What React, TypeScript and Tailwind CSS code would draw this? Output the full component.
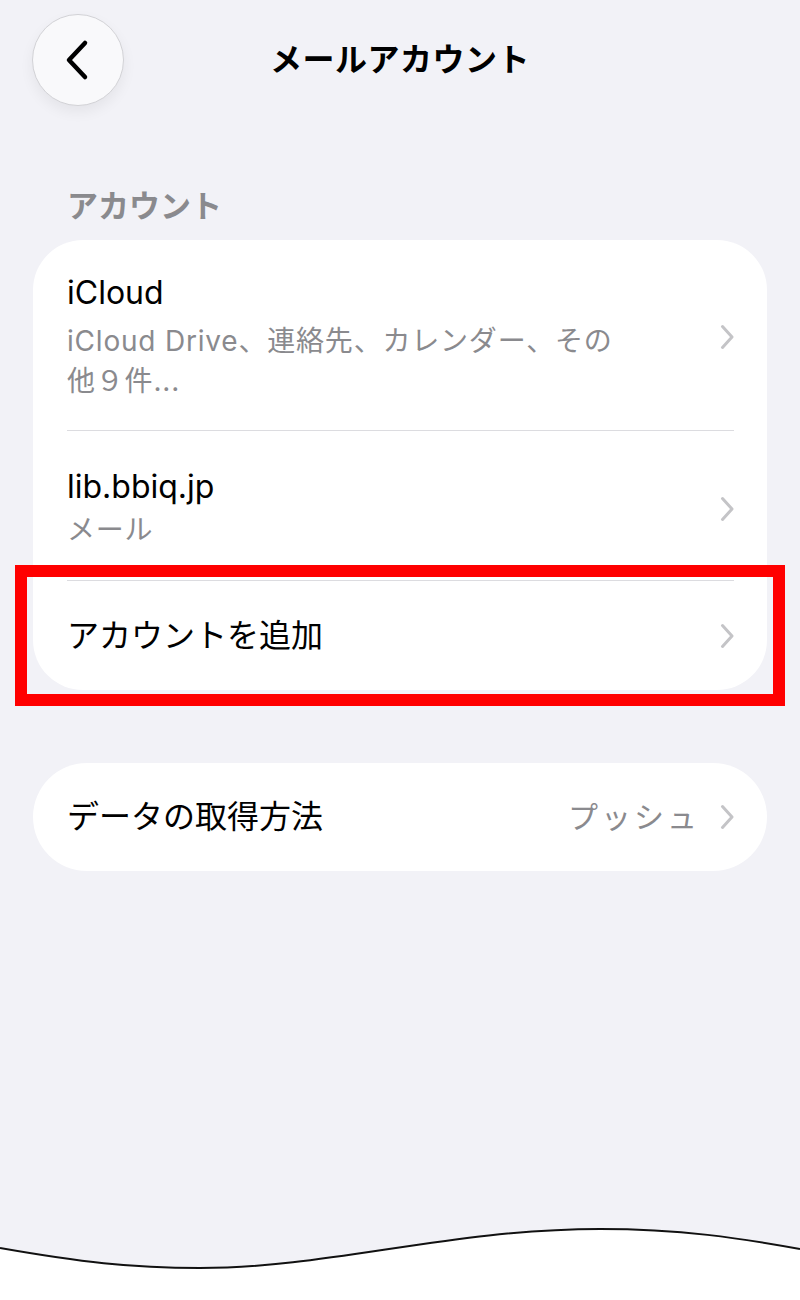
import React from "react";

const font = { fontFamily: 'Inter, "Noto Sans CJK JP", sans-serif' };

function Chevron() {
  return (
    <svg width="14" height="26" viewBox="0 0 14 26" fill="none" className="shrink-0">
      <polyline
        points="2.5,2.5 12,13 2.5,23.5"
        stroke="#c4c4c7"
        strokeWidth="3"
        strokeLinecap="round"
        strokeLinejoin="round"
      />
    </svg>
  );
}

function Divider() {
  return <div className="ml-[34px] mr-[33px] h-px bg-[#dcdce0]" />;
}

export default function App() {
  return (
    <div
      className="relative flex h-[1300px] w-[800px] flex-col overflow-hidden bg-[#f2f2f7] text-black"
      style={font}
    >
      {/* header */}
      <div className="grid grid-cols-[1fr_auto_1fr] items-center px-[32px] pt-[14px]">
        <button className="flex h-[92px] w-[92px] items-center justify-center rounded-full border border-[#d2d2d6] bg-[#f9f9fb] shadow-[0_6px_14px_rgba(0,0,0,0.06)]">
          <svg width="30" height="42" viewBox="0 0 30 42" fill="none">
            <polyline
              points="22,4 6,21 22,38"
              stroke="#000"
              strokeWidth="4.5"
              strokeLinecap="round"
              strokeLinejoin="round"
            />
          </svg>
        </button>
        <h1 className="text-[32px] font-bold leading-[40px] tracking-[0.5px]">メールアカウント</h1>
        <div />
      </div>

      {/* section header */}
      <div className="mt-[80px] px-[67px] text-[31px] font-semibold leading-[40px] text-[#8a8a8e]">
        アカウント
      </div>

      {/* accounts card */}
      <div className="mx-[33px] mt-[14px] rounded-[50px] bg-white">
        <div className="flex items-center pl-[34px] pr-[33px] pt-[33px] pb-[29px]">
          <div className="flex-1">
            <div className="text-[32px] leading-[40px]">iCloud</div>
            <div className="mt-[8px] text-[28px] leading-[40px] tracking-[0.8px] text-[#8a8a8e]">
              iCloud Drive、連絡先、カレンダー、その
              <br />
              他９件...
            </div>
          </div>
          <Chevron />
        </div>
        <Divider />
        <div className="flex items-center pl-[34px] pr-[33px] pt-[36px] pb-[30px]">
          <div className="flex-1">
            <div className="text-[32px] leading-[40px]">lib.bbiq.jp</div>
            <div className="mt-[3px] text-[28px] leading-[40px] tracking-[0.8px] text-[#8a8a8e]">メール</div>
          </div>
          <Chevron />
        </div>
        <Divider />
        <div className="flex h-[109px] items-center pl-[34px] pr-[33px]">
          <div className="flex-1 text-[32px] leading-[40px]">アカウントを追加</div>
          <Chevron />
        </div>
      </div>

      {/* fetch card */}
      <div className="mx-[33px] mt-[73px] flex h-[108px] items-center rounded-[54px] bg-white pl-[34px] pr-[33px]">
        <div className="flex-1 text-[32px] leading-[40px]">データの取得方法</div>
        <div className="mr-[20px] text-[30px] leading-[40px] tracking-[3px] text-[#8a8a8e]">プッシュ</div>
        <Chevron />
      </div>

      {/* bottom wave */}
      <svg className="mt-auto block" width="800" height="80" viewBox="0 0 800 80">
        <path
          d="M0 28 C 80 42, 130 48, 200 48 C 330 48, 450 9, 600 9 C 680 9, 740 18, 800 29 L 800 80 L 0 80 Z"
          fill="#ffffff"
        />
        <path
          d="M0 28 C 80 42, 130 48, 200 48 C 330 48, 450 9, 600 9 C 680 9, 740 18, 800 29"
          fill="none"
          stroke="#111"
          strokeWidth="2"
        />
      </svg>

      {/* highlight annotation */}
      <div className="pointer-events-none absolute left-[15px] top-[565px] h-[141px] w-[770px] border-[12px] border-[#ff0000]" />
    </div>
  );
}
